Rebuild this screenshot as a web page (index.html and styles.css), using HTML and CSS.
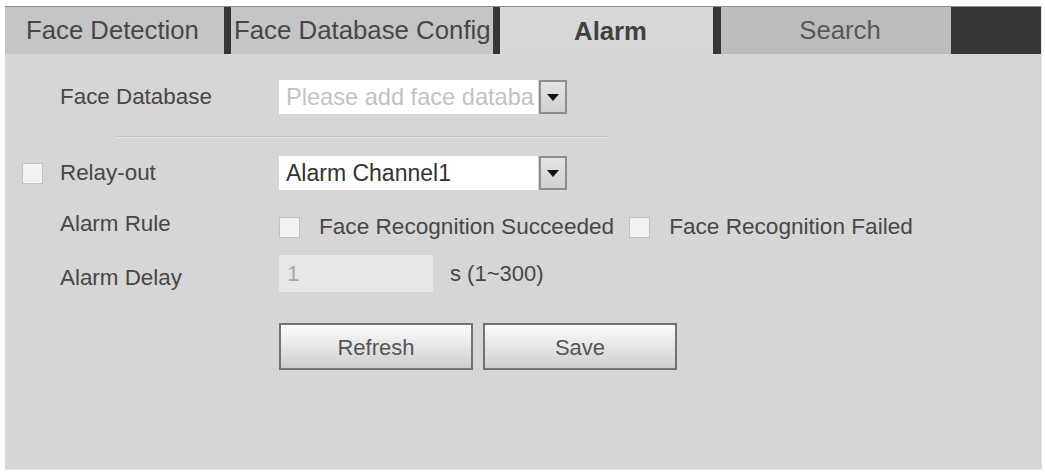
FILE: index.html
```html
<!DOCTYPE html>
<html>
<head>
<meta charset="utf-8">
<link rel="stylesheet" href="styles.css">
</head>
<body>
<div class="panel">
  <div class="tabs">
    <div class="tab t1">Face Detection</div>
    <div class="tab t2">Face Database Config</div>
    <div class="tab t3 active">Alarm</div>
    <div class="tab t4">Search</div>
  </div>
  <div class="content">
    <div class="row r1">
      <div class="lead"></div>
      <div class="label">Face Database</div>
      <div class="select">
        <div class="select-box placeholder">Please add face databa</div>
        <div class="select-btn"><span class="arrow"></span></div>
      </div>
    </div>
    <div class="sep"></div>
    <div class="row r2">
      <div class="lead"><span class="check"></span></div>
      <div class="label">Relay-out</div>
      <div class="select">
        <div class="select-box">Alarm Channel1</div>
        <div class="select-btn"><span class="arrow"></span></div>
      </div>
    </div>
    <div class="row r3">
      <div class="lead"></div>
      <div class="label">Alarm Rule</div>
      <div class="options">
        <span class="check"></span><span class="opt">Face Recognition Succeeded</span>
        <span class="check"></span><span class="opt">Face Recognition Failed</span>
      </div>
    </div>
    <div class="row r4">
      <div class="lead"></div>
      <div class="label">Alarm Delay</div>
      <div class="delay">
        <div class="input">1</div>
        <span class="unit">s (1~300)</span>
      </div>
    </div>
    <div class="row r5">
      <div class="lead"></div>
      <div class="label"></div>
      <div class="buttons">
        <div class="btn">Refresh</div>
        <div class="btn">Save</div>
      </div>
    </div>
  </div>
</div>
</body>
</html>
```
FILE: styles.css
```css
* { box-sizing: border-box; }
html, body {
  margin: 0;
  padding: 0;
  background: #ffffff;
}
body {
  padding: 6px 3px 5px 5px;
  font-family: "Liberation Sans", Arial, sans-serif;
  color: #474747;
}
.panel {
  width: 1037px;
  height: 464px;
  background: #d6d6d6;
  border-right: 1px solid #e2e2e2;
  border-bottom: 1px solid #e6e6e6;
}
.tabs {
  display: flex;
  height: 48px;
  background: #363636;
  border-top: 1px solid #8c8c8c;
  gap: 7px;
}
.tab {
  height: 47px;
  display: flex;
  align-items: center;
  justify-content: center;
  font-size: 25.7px;
  color: #474747;
  background: #c5c5c5;
  white-space: nowrap;
  overflow: hidden;
}
.t1 { width: 219px; padding-right: 4px; }
.t2 { width: 262px; justify-content: flex-start; padding-left: 3px; font-size: 25.8px; }
.t3 { width: 213px; padding-left: 8px; }
.t4 { width: 230px; margin-left: 1px; background: #bcbcbc; color: #575757; padding-left: 8px; }
.tab.active {
  background: #d7d7d7;
  font-weight: bold;
  color: #404040;
  height: 48px;
}
.content {
  padding: 26px 0 0 17px;
}
.row {
  display: flex;
  align-items: center;
}
.lead {
  width: 38px;
  display: flex;
  align-items: center;
}
.label {
  width: 219px;
  font-size: 22.4px;
  color: #474747;
}
.check {
  display: inline-block;
  width: 21px;
  height: 21px;
  background: #f1f1f1;
  border: 1px solid #c2c2c2;
  flex: none;
}
.r1, .r2 { height: 34px; }
.select {
  display: flex;
  height: 34px;
}
.select-box {
  width: 259px;
  height: 34px;
  background: #ffffff;
  font-size: 23px;
  line-height: 34px;
  padding-left: 7px;
  white-space: nowrap;
  overflow: hidden;
  color: #333333;
}
.select-box.placeholder { color: #c2c2c2; font-size: 23.6px; }
.select-btn {
  width: 28px;
  height: 34px;
  margin-left: 1px;
  border: 2px solid #8d8d8d;
  background: linear-gradient(#e4e4e4, #d0d0d0);
  display: flex;
  align-items: center;
  justify-content: center;
}
.arrow {
  width: 0;
  height: 0;
  border-left: 6px solid transparent;
  border-right: 6px solid transparent;
  border-top: 7px solid #111111;
}
.sep {
  width: 495px;
  margin: 22px 0 18px 93px;
  border-top: 1px solid #c6c6c6;
  border-bottom: 1px solid #e2e2e2;
}
.r3 {
  height: 34px;
  margin-top: 20px;
}
.r3 .label { margin-top: -6px; }
.options {
  display: flex;
  align-items: center;
  font-size: 22.6px;
}
.opt { margin: 0 15px 0 19px; color: #474747; }
.r4 {
  margin-top: 11px;
  height: 37px;
}
.r4 .label { margin-top: 8px; }
.delay {
  display: flex;
  align-items: center;
}
.input {
  width: 154px;
  height: 37px;
  background: #e7e7e7;
  font-size: 22px;
  line-height: 37px;
  padding-left: 8px;
  color: #a8a8a8;
}
.unit {
  margin-left: 17px;
  font-size: 22px;
  color: #474747;
}
.r5 { margin-top: 31px; }
.buttons {
  display: flex;
  gap: 10px;
}
.btn {
  width: 194px;
  height: 47px;
  border: 2px solid #727272;
  background: linear-gradient(#fbfbfb, #e6e6e6 50%, #cdcdcd);
  font-size: 22px;
  color: #555555;
  display: flex;
  align-items: center;
  justify-content: center;
  padding-top: 3px;
}
```
